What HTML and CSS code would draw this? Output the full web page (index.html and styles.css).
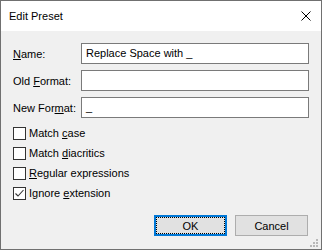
FILE: index.html
```html
<!DOCTYPE html>
<html lang="en">
<head>
  <meta charset="UTF-8" />
  <title>Edit Preset</title>
  <link rel="stylesheet" href="styles.css">
</head>
<body>

  <div class="window">
    <div class="titlebar">
      <span class="title">Edit Preset</span>
      <svg class="close" width="10" height="10" viewBox="0 0 10 10">
        <path d="M0.5 0.5 L9.5 9.5 M9.5 0.5 L0.5 9.5" stroke="#000" stroke-width="1" fill="none"/>
      </svg>
    </div>

    <div class="content">
      <div class="fields">
        <label><u>N</u>ame:</label>
        <div class="input">Replace Space with _</div>
        <label>Old <u>F</u>ormat:</label>
        <div class="input"></div>
        <label>New For<u>m</u>at:</label>
        <div class="input">_</div>
      </div>

      <div class="checks">
        <div class="check"><span class="box"></span><span>Match <u>c</u>ase</span></div>
        <div class="check"><span class="box"></span><span>Match <u>d</u>iacritics</span></div>
        <div class="check"><span class="box"></span><span><u>R</u>egular expressions</span></div>
        <div class="check">
          <span class="box">
            <svg width="11" height="11" viewBox="0 0 11 11">
              <path d="M1.5 5.5 L4 8 L9.5 2" stroke="#333" stroke-width="1.1" fill="none"/>
            </svg>
          </span>
          <span>Ignore <u>e</u>xtension</span>
        </div>
      </div>

      <div class="buttons">
        <button class="btn default">OK</button>
        <button class="btn">Cancel</button>
      </div>
    </div>

    <svg class="grip" width="8" height="8" viewBox="0 0 8 8">
      <rect x="6" y="0" width="2" height="2" fill="#b8b8b8"/>
      <rect x="3" y="3" width="2" height="2" fill="#b8b8b8"/>
      <rect x="6" y="3" width="2" height="2" fill="#b8b8b8"/>
      <rect x="0" y="6" width="2" height="2" fill="#b8b8b8"/>
      <rect x="3" y="6" width="2" height="2" fill="#b8b8b8"/>
      <rect x="6" y="6" width="2" height="2" fill="#b8b8b8"/>
    </svg>
  </div>

</body>
</html>
```

FILE: styles.css
```css
body {
  margin: 0;
  font-family: 'Liberation Sans', Arial, sans-serif;
  font-size: 11px;
  color: #000;
  background: #fff;
}

.window {
  position: relative;
  width: 322px;
  height: 250px;
  box-sizing: border-box;
  border: 1px solid #707070;
  display: flex;
  flex-direction: column;
}

.titlebar {
  height: 30px;
  background: #fff;
  display: flex;
  align-items: center;
  justify-content: space-between;
  padding: 0 10px 0 8px;
}

.title {
  font-size: 11px;
}

.content {
  flex: 1;
  background: #f0f0f0;
  padding: 12px 12px 0 12px;
}

.fields {
  display: grid;
  grid-template-columns: 68px 1fr;
  row-gap: 6px;
  align-items: center;
}

.input {
  height: 21px;
  box-sizing: border-box;
  border: 1px solid #7a7a7a;
  background: #fff;
  padding: 0 4px;
  line-height: 19px;
}

.checks {
  margin-top: 5px;
  display: flex;
  flex-direction: column;
}

.check {
  height: 20px;
  display: flex;
  align-items: center;
  gap: 3px;
}

.box {
  width: 13px;
  height: 13px;
  box-sizing: border-box;
  border: 1px solid #333;
  background: #fff;
  display: flex;
  align-items: center;
  justify-content: center;
}

.buttons {
  margin-top: 12px;
  display: flex;
  justify-content: flex-end;
  gap: 8px;
  padding-right: 1px;
}

.btn {
  position: relative;
  width: 73px;
  height: 21px;
  box-sizing: border-box;
  border: 1px solid #adadad;
  background: #e1e1e1;
  font-family: inherit;
  font-size: 11px;
  color: #000;
  padding: 0;
}

.btn.default {
  border: 2px solid #0078d7;
}

.btn.default::after {
  content: "";
  position: absolute;
  inset: 0;
  border: 1px dotted #000;
}

.grip {
  position: absolute;
  right: 3px;
  bottom: 2px;
}
```
